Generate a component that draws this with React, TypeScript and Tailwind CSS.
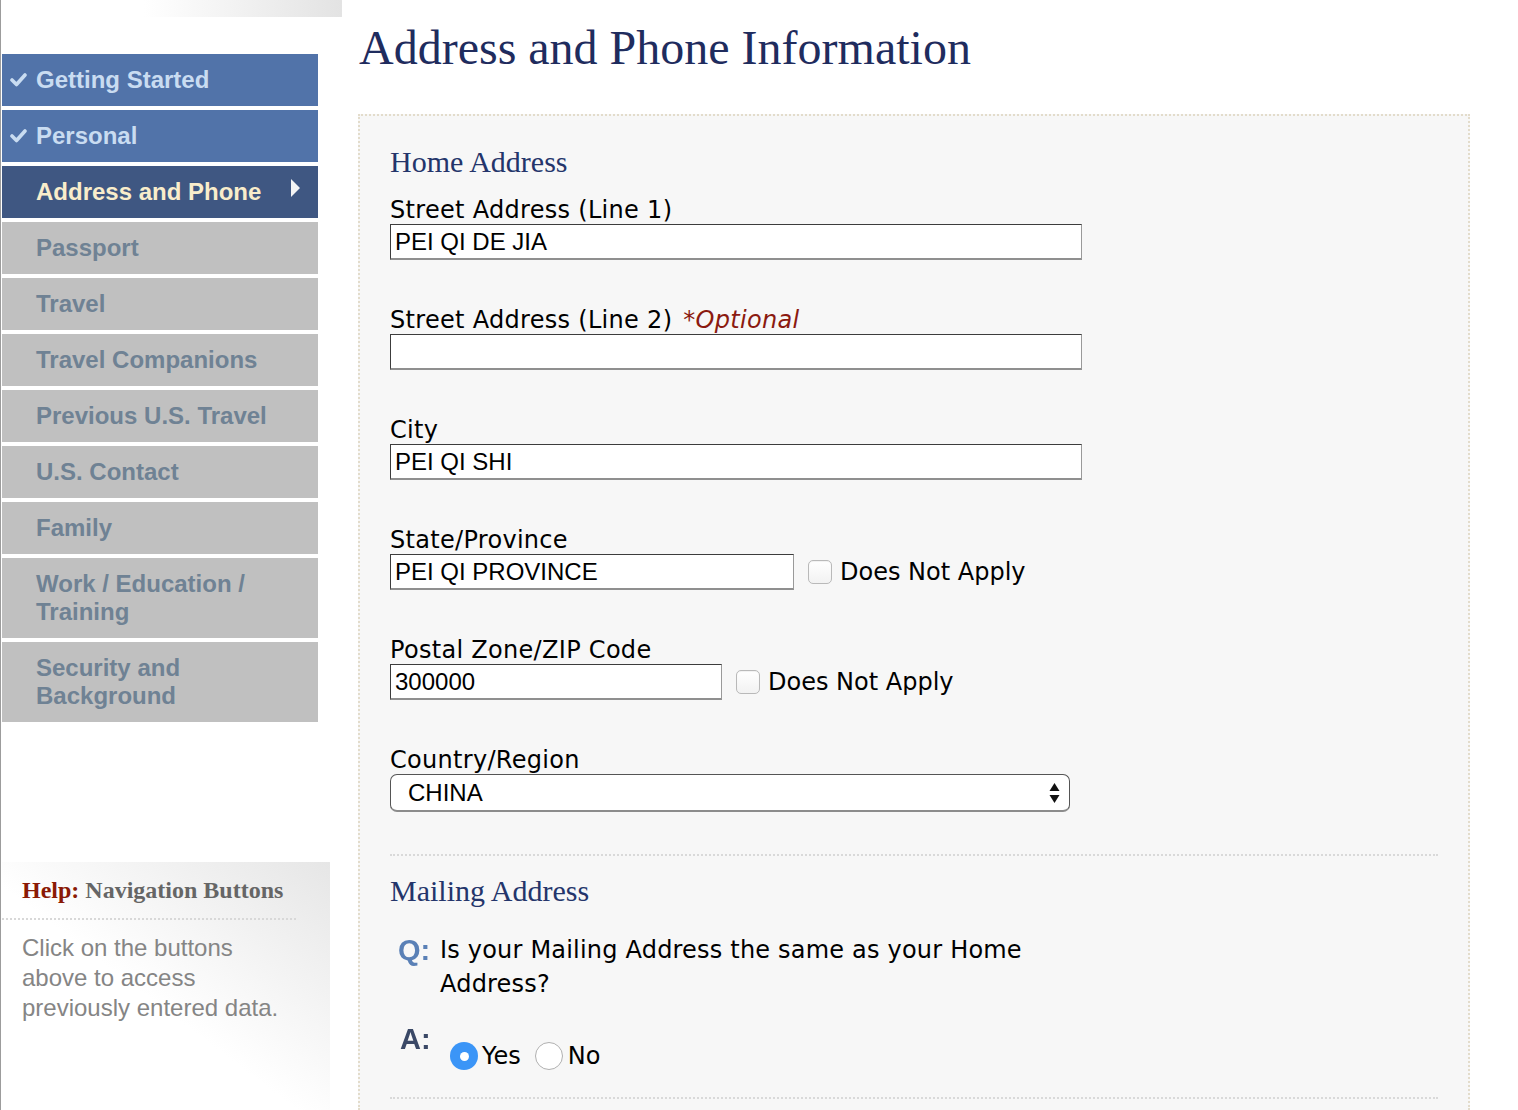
import React from "react";

const serif = { fontFamily: '"Liberation Serif", "Times New Roman", serif' };
const arial = { fontFamily: '"Liberation Sans", Arial, sans-serif' };
const verdana = { fontFamily: '"DejaVu Sans", Verdana, sans-serif' };

type NavItem = { label: string; state: "done" | "active" | "todo" };

const navItems: NavItem[] = [
  { label: "Getting Started", state: "done" },
  { label: "Personal", state: "done" },
  { label: "Address and Phone", state: "active" },
  { label: "Passport", state: "todo" },
  { label: "Travel", state: "todo" },
  { label: "Travel Companions", state: "todo" },
  { label: "Previous U.S. Travel", state: "todo" },
  { label: "U.S. Contact", state: "todo" },
  { label: "Family", state: "todo" },
  { label: "Work / Education / Training", state: "todo" },
  { label: "Security and Background", state: "todo" },
];

const Check = () => (
  <svg width="17" height="16" viewBox="0 0 17 16" className="blur-[0.4px]">
    <path d="M2 8 L6.5 12.5 L15 3" fill="none" stroke="#c9dcf1" strokeWidth="3.6" strokeLinecap="round" strokeLinejoin="round" />
  </svg>
);

const NavButton = ({ item }: { item: NavItem }) => {
  const bg =
    item.state === "done" ? "bg-[#5173a9]" : item.state === "active" ? "bg-[#3f5782]" : "bg-[#c0c0c0]";
  const color =
    item.state === "done" ? "text-[#c9dcf1]" : item.state === "active" ? "text-[#f9edcb]" : "text-[#6f8294]";
  return (
    <div className={`flex items-start ${bg} py-[12px] pr-[18px]`}>
      <div className="w-[34px] shrink-0 h-[28px] flex items-center pl-[8px]">
        {item.state === "done" && <Check />}
      </div>
      <div className={`w-[256px] text-[24px] leading-[28px] font-bold ${color}`} style={arial}>
        {item.label}
      </div>
      {item.state === "active" && (
        <svg width="9" height="18" viewBox="0 0 9 18" className="mt-[1px]">
          <path d="M0 0 L9 9 L0 18 Z" fill="#f4f4f4" />
        </svg>
      )}
    </div>
  );
};

const TextInput = ({ value, width }: { value: string; width: string }) => (
  <div
    className={`${width} h-[36px] bg-white border border-t-[#3c3c3c] border-l-[#3c3c3c] border-r-[#9a9a9a] border-b-2 border-b-[#8f8f8f] flex items-center pl-[4px] text-[24px] text-black`}
    style={arial}
  >
    {value}
  </div>
);

const Checkbox = () => (
  <div className="w-[24px] h-[24px] rounded-[5px] border border-[#b9b9b9] bg-gradient-to-b from-white to-[#f2f2f2] shadow-[inset_0_1px_1px_rgba(0,0,0,0.06)]" />
);

const Label = ({ children }: { children: React.ReactNode }) => (
  <div className="pt-[1px] h-[28px] text-[24px] leading-[28px] tracking-[0.3px] text-black" style={verdana}>
    {children}
  </div>
);

const Radio = ({ checked }: { checked?: boolean }) =>
  checked ? (
    <div className="w-[28px] h-[28px] rounded-full bg-[#3b95f7] flex items-center justify-center">
      <div className="w-[9px] h-[9px] rounded-full bg-white" />
    </div>
  ) : (
    <div className="w-[28px] h-[28px] rounded-full bg-white border border-[#b0b0b0]" />
  );

export default function App() {
  return (
    <div className="w-[1518px] h-[1110px] overflow-hidden bg-white flex">
      {/* left column */}
      <div className="w-[342px] shrink-0 flex flex-col border-l border-[#9c9c9c]">
        <div className="h-[17px] bg-[linear-gradient(to_right,#ffffff_42%,#e3e3e3)]" />
        <div className="mt-[37px] ml-[1px] w-[316px] flex flex-col gap-[4px]">
          {navItems.map((item) => (
            <NavButton key={item.label} item={item} />
          ))}
        </div>
        <div className="mt-[140px] ml-[1px] w-[328px] flex-1 bg-[linear-gradient(to_bottom_left,#e6e6e6,#ffffff_55%)] pt-[14px]">
          <div className="pl-[20px] text-[24px] leading-[28px] font-bold" style={serif}>
            <span className="text-[#8a1a05]">Help:</span>{" "}
            <span className="text-[#666666]">Navigation Buttons</span>
          </div>
          <div className="mt-[14px] mr-[34px] border-t-2 border-dotted border-[#d8d8d8]" />
          <div className="mt-[13px] pl-[20px] w-[290px] text-[24px] leading-[30px] text-[#858585]" style={arial}>
            Click on the buttons above to access previously entered data.
          </div>
        </div>
      </div>

      {/* main column */}
      <div className="ml-[16px] w-[1112px] flex flex-col">
        <h1 className="mt-[20px] ml-[1px] text-[48px] leading-[56px] text-[#1f2c5e]" style={serif}>
          Address and Phone Information
        </h1>
        <div className="mt-[38px] flex-1 bg-[#f7f7f7] border-2 border-b-0 border-dotted border-[#e3dccb] pl-[30px] pr-[30px] pt-[28px]">
          <h2 className="text-[30px] leading-[36px] text-[#24356b]" style={serif}>
            Home Address
          </h2>

          <div className="mt-[15px] flex flex-col gap-[45px]">
            <div className="flex flex-col gap-[1px]">
              <Label>Street Address (Line 1)</Label>
              <TextInput value="PEI QI DE JIA" width="w-[692px]" />
            </div>
            <div className="flex flex-col gap-[1px]">
              <Label>
                Street Address (Line 2){" "}
                <span className="ml-[3px] italic text-[#8b1a10]">*Optional</span>
              </Label>
              <TextInput value="" width="w-[692px]" />
            </div>
            <div className="flex flex-col gap-[1px]">
              <Label>City</Label>
              <TextInput value="PEI QI SHI" width="w-[692px]" />
            </div>
            <div className="flex flex-col gap-[1px]">
              <Label>State/Province</Label>
              <div className="flex items-center">
                <TextInput value="PEI QI PROVINCE" width="w-[404px]" />
                <div className="ml-[14px]">
                  <Checkbox />
                </div>
                <span className="ml-[8px] text-[24px] text-black" style={verdana}>
                  Does Not Apply
                </span>
              </div>
            </div>
            <div className="flex flex-col gap-[1px]">
              <Label>Postal Zone/ZIP Code</Label>
              <div className="flex items-center">
                <TextInput value="300000" width="w-[332px]" />
                <div className="ml-[14px]">
                  <Checkbox />
                </div>
                <span className="ml-[8px] text-[24px] text-black" style={verdana}>
                  Does Not Apply
                </span>
              </div>
            </div>
            <div className="flex flex-col gap-[1px]">
              <Label>Country/Region</Label>
              <div
                className="w-[680px] h-[38px] bg-white rounded-[7px] border border-[#555555] border-b-2 border-b-[#8c8c8c] flex items-center pl-[17px] pr-[9px] text-[24px] text-black"
                style={arial}
              >
                <span className="flex-1">CHINA</span>
                <svg width="11" height="22" viewBox="0 0 11 22">
                  <path d="M5.5 1 L10.5 9 L0.5 9 Z" fill="#111" />
                  <path d="M0.5 13 L10.5 13 L5.5 21 Z" fill="#111" />
                </svg>
              </div>
            </div>
          </div>

          <div className="mt-[42px] border-t-2 border-dotted border-[#d9d9d9]" />

          <h2 className="mt-[17px] text-[30px] leading-[36px] text-[#24356b]" style={serif}>
            Mailing Address
          </h2>

          <div className="mt-[24px] flex">
            <div
              className="ml-[8px] w-[42px] text-[29px] leading-[34px] font-bold text-[#5a80b6] blur-[0.5px]"
              style={arial}
            >
              Q:
            </div>
            <div className="w-[610px] text-[24px] leading-[34px] tracking-[0.2px] text-black" style={verdana}>
              Is your Mailing Address the same as your Home Address?
            </div>
          </div>

          <div className="mt-[23px] flex items-start">
            <div
              className="ml-[10px] w-[50px] text-[29px] leading-[30px] font-bold text-[#3a4866] blur-[0.5px]"
              style={arial}
            >
              A:
            </div>
            <div className="mt-[14px] flex items-center" style={verdana}>
              <Radio checked />
              <span className="ml-[4px] text-[24px] text-black">Yes</span>
              <div className="ml-[14px]">
                <Radio />
              </div>
              <span className="ml-[5px] text-[24px] text-black">No</span>
            </div>
          </div>

          <div className="mt-[23px] border-t-2 border-dotted border-[#d9d9d9]" />
        </div>
      </div>
    </div>
  );
}
